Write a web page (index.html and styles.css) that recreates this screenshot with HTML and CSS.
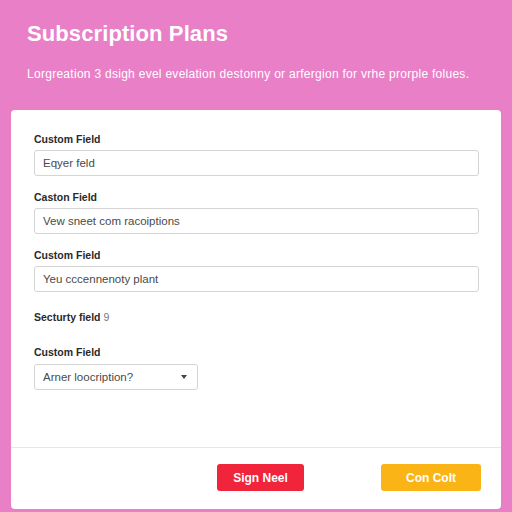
FILE: index.html
```html
<!DOCTYPE html>
<html lang="en">
<head>
    <meta charset="UTF-8">
    <title>Subscription Plans</title>
    <link rel="stylesheet" href="styles.css">
</head>
<body>
    <div class="header">
        <h1>Subscription Plans</h1>
        <p>Lorgreation 3 dsigh evel evelation destonny or arfergion for vrhe prorple folues.</p>
    </div>

    <div class="card">
        <div class="card-body">
            <div class="field">
                <label>Custom Field</label>
                <div class="input">Eqyer feld</div>
            </div>
            <div class="field">
                <label>Caston Field</label>
                <div class="input">Vew sneet com racoiptions</div>
            </div>
            <div class="field">
                <label>Custom Field</label>
                <div class="input">Yeu cccennenoty plant</div>
            </div>
            <div class="field security">
                <label>Secturty field <span class="hint">9</span></label>
            </div>
            <div class="field">
                <label>Custom Field</label>
                <div class="input select">
                    <span>Arner loocription?</span>
                    <svg width="6" height="4" viewBox="0 0 6 4"><path d="M0 0 L6 0 L3 4 Z" fill="#444"/></svg>
                </div>
            </div>
        </div>
        <div class="card-footer">
            <button class="btn btn-red">Sign Neel</button>
            <button class="btn btn-yellow">Con Colt</button>
        </div>
    </div>
</body>
</html>
```

FILE: styles.css
```css
body {
    background-color: #e87fc7;
    font-family: "Liberation Sans", Arial, sans-serif;
    margin: 0;
    padding: 0;
}

.header {
    padding: 21px 27px 0;
    color: #fff;
    height: 89px;
}

.header h1 {
    font-size: 22px;
    font-weight: bold;
    margin: 0;
    line-height: 26px;
    letter-spacing: 0.1px;
}

.header p {
    font-size: 12px;
    letter-spacing: 0.28px;
    margin: 20px 0 0;
}

.card {
    background-color: #fff;
    margin: 0 11px;
    border-radius: 4px;
    height: 399px;
}

.card-body {
    padding: 22px 22px 0 23px;
    height: 315px;
    border-bottom: 1px solid #e6e6e6;
}

.field {
    margin-bottom: 14px;
}

.field label {
    display: block;
    font-size: 10.5px;
    font-weight: bold;
    color: #2a2a2a;
    line-height: 14px;
    margin-bottom: 4px;
}

.field.security {
    margin-top: 18px;
    margin-bottom: 21px;
}

.hint {
    font-weight: normal;
    color: #777;
}

.input {
    height: 24px;
    border: 1px solid #d4d4d4;
    border-radius: 3px;
    padding: 0 8px;
    font-size: 11.5px;
    color: #4a4a4a;
    display: flex;
    align-items: center;
}

.select {
    width: 144px;
    justify-content: space-between;
    margin-top: 5px;
    padding-right: 10px;
}

.card-footer {
    display: flex;
    justify-content: flex-end;
    gap: 77px;
    padding: 16px 20px 0 0;
}

.btn {
    border: none;
    border-radius: 3px;
    color: #fff;
    font-family: "Liberation Sans", Arial, sans-serif;
    font-size: 12px;
    font-weight: bold;
    height: 27px;
}

.btn-red {
    background-color: #f0243a;
    width: 87px;
}

.btn-yellow {
    background-color: #fbb416;
    width: 100px;
}
```
